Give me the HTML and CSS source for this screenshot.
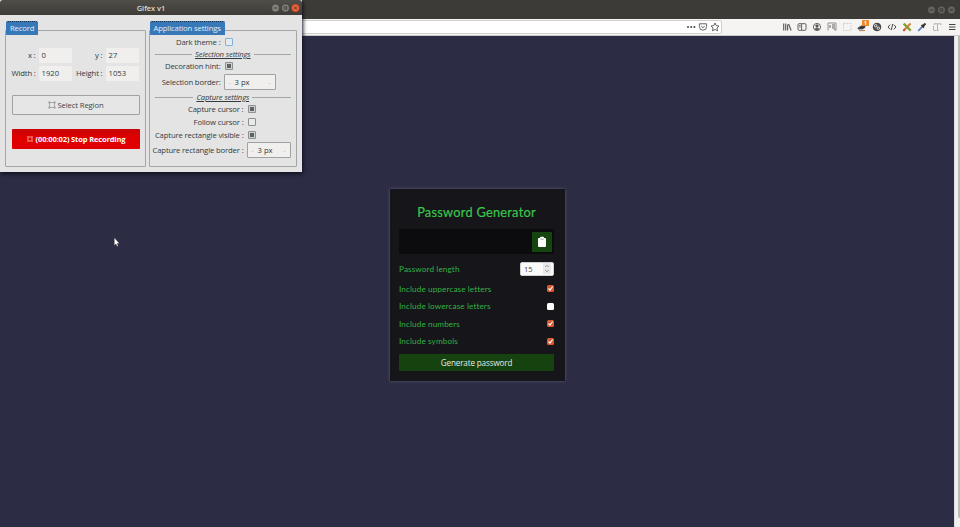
FILE: index.html
```html
<!DOCTYPE html>
<html lang="en">
<head>
<meta charset="utf-8">
<title>Password Generator</title>
<link rel="stylesheet" href="styles.css">
</head>
<body>
<div class="browser">
  <header class="titlebar">
    <svg class="winbtns dim" viewBox="0 0 30 10"><circle cx="4.500" cy="5" r="3.900"/><circle cx="14.500" cy="5" r="3.900"/><circle cx="24.500" cy="5" r="3.900"/><path d="M2.700 5h3.600M13.200 3.800h2.600v2.400h-2.600zM23.200 3.700l2.600 2.600M25.800 3.700l-2.600 2.600"/></svg>
  </header>
  <nav class="toolbar">
    <div class="urlbar">
      <svg viewBox="0 0 12 12" class="solid"><circle cx="3" cy="6" r="1.1"/><circle cx="6.2" cy="6" r="1.1"/><circle cx="9.4" cy="6" r="1.1"/></svg>
      <svg viewBox="0 0 12 12"><path d="M2.4 2.8h7.2v2.8a3.6 3.6 0 0 1-7.2 0zM4.2 5l1.8 1.7L7.8 5"/></svg>
      <svg viewBox="0 0 12 12"><path d="M6 2l1.2 2.6 2.8.4-2 2 .5 2.8L6 8.500l-2.500 1.300L4 7 2 5l2.800-.4z"/></svg>
    </div>
    <div class="tools">
      <svg viewBox="0 0 12 12"><path d="M2.700 2.500v7M4.700 2.500v7M6.600 3.500v6M7.600 3l2.500 6.500" stroke-width="1.100"/></svg>
      <svg viewBox="0 0 12 12"><rect x="2" y="2.700" width="8" height="6.600" rx="1"/><path d="M5.600 3v6M3.200 4.600h1.400M3.200 6h1.400"/></svg>
      <svg viewBox="0 0 12 12"><circle cx="6" cy="6" r="3.600"/><circle cx="6" cy="5" r="1.200" fill="#555"/><path d="M4 8c.5-1 3.500-1 4 0l-2 .8z" fill="#555"/></svg>
      <svg viewBox="0 0 12 12"><path d="M2 9.500v-7.500h8v7.500" stroke="#888"/><path d="M3 4h2v3H3zM6 3h3v5H6zM8 7h2v2.500H8z" fill="#aaa" stroke="none"/></svg>
      <svg viewBox="0 0 12 12"><rect x="2.500" y="2.500" width="7.500" height="7" stroke="#ccc" stroke-dasharray="2 1"/></svg>
      <div class="badged"><svg viewBox="0 0 12 12"><path d="M2 7l3-2 4-.5v2L6.500 8 2 8z" fill="#333"/><path d="M3 9.600h6" stroke="#a87048"/></svg><b>1</b></div>
      <svg viewBox="0 0 12 12"><circle cx="6" cy="6" r="3.800" fill="#555" stroke="#333"/><circle cx="4.600" cy="4.700" r="1.200" stroke="#eee"/><circle cx="7.400" cy="7.200" r="1.200" stroke="#eee"/></svg>
      <svg viewBox="0 0 12 12"><path d="M4.200 3.600L2 6l2.200 2.400M7.800 3.600L10 6 7.800 8.400M6.700 3L5.300 9" stroke="#333"/></svg>
      <svg viewBox="0 0 12 12"><path d="M9.600 2.500L2.600 9.500" stroke="#d37a38" stroke-width="1.900"/><path d="M2.700 2.700l7 7" stroke="#87a02d" stroke-width="2.400"/><path d="M2.300 9.800l1.500-1.500" stroke="#d34334" stroke-width="1.800"/></svg>
      <svg viewBox="0 0 12 12"><path d="M2.200 9.800l4-4" stroke="#4b82c6" stroke-width="1.700"/><path d="M5.500 4l2.500 2.500M7 5l2.500-2.500" stroke="#333" stroke-width="1.900"/></svg>
      <svg viewBox="0 0 12 12"><path d="M3 4V2.800h7V4M6.500 3v6.500M5.400 9.500h2.200M2.500 5v4.500M3 9.500h2" stroke="#aaa"/></svg>
      <svg viewBox="0 0 12 12"><path d="M3 3.500h6.500M3 6h6.500M3 8.500h6.500" stroke="#444" stroke-width="1"/></svg>
    </div>
  </nav>
  <div class="viewport">
    <main class="page">
      <section class="card">
        <h1>Password Generator</h1>
        <div class="result">
          <button class="copy"><svg viewBox="0 0 12 14"><rect x="2" y="3" width="8" height="9" rx="1" fill="#fff"/><rect x="4" y="1.700" width="4" height="2.500" rx="1" fill="#fff"/><path d="M4.200 4.200h3.600" stroke="#7b8b7b" stroke-width=".7"/></svg></button>
        </div>
        <div class="row length"><span>Password length</span><div class="num"><span>15</span><i><svg viewBox="0 0 8 11"><path d="M2.300 4L4 2.300 5.700 4M2.300 7L4 8.700 5.700 7"/></svg></i></div></div>
        <div class="row"><span>Include uppercase letters</span><svg class="check" viewBox="0 0 7 7"><path d="M1.500 3.500l1.500 1.600 2.600-3.600"/></svg></div>
        <div class="row"><span>Include lowercase letters</span><svg class="check off" viewBox="0 0 7 7"></svg></div>
        <div class="row"><span>Include numbers</span><svg class="check" viewBox="0 0 7 7"><path d="M1.500 3.500l1.500 1.600 2.600-3.600"/></svg></div>
        <div class="row"><span>Include symbols</span><svg class="check" viewBox="0 0 7 7"><path d="M1.500 3.500l1.500 1.600 2.600-3.600"/></svg></div>
        <button class="generate">Generate password</button>
      </section>
    </main>
    <div class="scroll"><i></i></div>
  </div>
</div>

<div class="gifex">
  <header class="gtitle"><span>Gifex v1</span>
    <svg class="winbtns" viewBox="0 0 30 10"><circle cx="4.500" cy="5" r="3.900"/><circle cx="14.500" cy="5" r="3.900"/><circle cx="24.500" cy="5" r="4" class="close"/><path d="M2.700 5h3.600M13.200 3.800h2.600v2.400h-2.600zM23.200 3.700l2.600 2.600M25.800 3.700l-2.600 2.600"/></svg>
  </header>
  <div class="panels">
    <section class="panel record">
      <h2>Record</h2>
      <div class="coords">
        <label>x :</label><span class="box">0</span><label>y :</label><span class="box">27</span>
        <label>Width :</label><span class="box">1920</span><label>Height :</label><span class="box">1053</span>
      </div>
      <button class="select"><svg viewBox="0 0 8 8"><path d="M1.500 1.500h5v5h-5z"/><path d="M.8.800h1.300v1.300H.8zM5.900.8h1.300v1.300H5.900zM.8 5.900h1.300v1.300H.8zM5.900 5.900h1.300v1.300H5.900z" class="nodes"/></svg><span>Select Region</span></button>
      <button class="stop"><svg viewBox="0 0 8 8"><rect x="2" y="2" width="4" height="4" rx=".5"/><path d="M1.300 1.700h1M5.700 1.700h1M1.300 6.300h1M5.700 6.300h1"/></svg><span>(00:00:02) Stop Recording</span></button>
    </section>
    <section class="panel settings">
      <h2>Application settings</h2>
      <div class="opt r1"><label>Dark theme :</label><i class="cb focus"></i></div>
      <div class="sep"><span>Selection settings</span></div>
      <div class="opt r2"><label>Decoration hint:</label><i class="cb on"></i></div>
      <div class="opt r3"><label>Selection border:</label><div class="spin"><i>-</i><span>3 px</span><i>-</i></div></div>
      <div class="sep s2"><span>Capture settings</span></div>
      <div class="opt r4"><label>Capture cursor :</label><i class="cb on"></i></div>
      <div class="opt r4"><label>Follow cursor :</label><i class="cb"></i></div>
      <div class="opt r4"><label>Capture rectangle visible :</label><i class="cb on"></i></div>
      <div class="opt r5"><label>Capture rectangle border :</label><div class="spin"><i>-</i><span>3 px</span><i>-</i></div></div>
    </section>
  </div>
</div>
<svg class="cursor" viewBox="0 0 7 10"><path d="M1.200 .6v8l1.800-1.500 1 2.300 1.300-.5-1-2.400h2.300z" fill="#fff" stroke="#111" stroke-width=".4"/></svg>
</body>
</html>
```
FILE: styles.css
```css
* { box-sizing: border-box; }
body { margin: 0; width: 960px; height: 527px; overflow: hidden; position: relative; font-family: "Open Sans", sans-serif; font-size: 7.7px; }
svg { display: block; flex: none; fill: none; stroke: #555; stroke-width: .9; }
button { border: 0; padding: 0; margin: 0; font: inherit; letter-spacing: inherit; }
i { font-style: normal; }

.browser { width: 960px; height: 527px; display: flex; flex-direction: column; }
.titlebar { height: 19px; background: #3c3b37; display: flex; justify-content: flex-end; align-items: center; padding-right: 3px; }
.winbtns { width: 30px; height: 10px; fill: #85827b; stroke: #33322e; stroke-width: .5; }
.winbtns path { fill: none; stroke-width: .8; }
.winbtns .close { fill: #ec6237; stroke: #80331d; }
.winbtns.dim { fill: #66645e; stroke: #2e2d2a; }
.toolbar { height: 17px; background: #f5f4f2; border-bottom: 1px solid #c9c8cb; display: flex; align-items: center; justify-content: space-between; padding-right: 2px; }
.urlbar { width: 722px; height: 14px; background: #fff; border: 1px solid #d2d0cd; border-radius: 2px; display: flex; justify-content: flex-end; align-items: center; }
.urlbar svg { width: 12px; height: 12px; }
.urlbar .solid { fill: #555; stroke: none; }
.tools { display: flex; gap: 3px; }
.tools svg { width: 12px; height: 12px; }
.badged { position: relative; }
.badged b { position: absolute; left: 6px; top: -1px; width: 7px; height: 6px; background: #f0892c; color: #fff; font-size: 5px; line-height: 6px; text-align: center; }
.viewport { flex: 1; display: flex; }
.page { width: 954px; background: #2c2d44; display: flex; flex-direction: column; align-items: center; padding-top: 153px; }
.scroll { width: 6px; background: #efefed; border-left: 1px solid #dddde3; padding-left: 3px; }
.scroll i { display: block; height: 482px; background: #b9bbb7; border-radius: 0 0 0 2px; }

.card { width: 175px; height: 192px; background: #15151a; padding: 13px 10.5px 10px 9.5px; color: #34b045; font-family: Lato, sans-serif; box-shadow: 0 0 3px 0 #5d5e7c; display: flex; flex-direction: column; }
.card h1 { margin: 0; height: 20px; line-height: 20px; font-size: 12.8px; font-weight: 400; text-align: center; color: #3bc64a; white-space: nowrap; -webkit-text-stroke: .2px #3bc64a; letter-spacing: .25px; }
.result { margin-top: 7px; height: 25px; background: #0c0c0f; display: flex; justify-content: flex-end; align-items: center; padding-right: 2px; }
.copy { width: 20px; height: 20px; background: #15460f; display: grid; place-items: center; }
.copy svg { width: 12px; height: 14px; stroke: none; }
.row { height: 17.5px; display: flex; align-items: center; justify-content: space-between; font-size: 8.2px; letter-spacing: .1px; white-space: nowrap; }
.length { height: 15px; margin: 7px 0 4px; }
.num { width: 34px; height: 14px; background: #fafafa; border: 1px solid #cfcfcf; border-radius: 2px; color: #444; display: flex; justify-content: space-between; align-items: center; padding: 0 2px 0 3px; font: 7.5px "Open Sans", sans-serif; letter-spacing: 0; }
.num svg { width: 8px; height: 11px; stroke: #777; background: #e8e8e8; stroke-width: .8; }
.check { width: 7px; height: 7px; border-radius: 1.5px; background: #d9582f; stroke: #fff; stroke-width: 1.1; }
.off { background: #fff; }
.generate { height: 17px; margin-top: 4px; background: #15420f; color: #e6e9e5; font-family: "Open Sans", sans-serif; font-size: 8.1px; letter-spacing: -.14px; line-height: 17px; text-align: center; }

.gifex { position: absolute; left: 0; top: 0; width: 302px; height: 172px; background: #e4e4e4; box-shadow: 1px 2px 4px #101020; color: #323a3d; letter-spacing: -.14px; display: flex; flex-direction: column; }
.gtitle { height: 15px; background: linear-gradient(#504e48, #3d3c37); display: grid; grid-template-columns: 31px 1fr 31px; align-items: center; color: #dfdbd2; font-weight: 600; font-size: 7.4px; text-align: center; border-radius: 3px 3px 0 0; letter-spacing: 0; }
.gtitle span { grid-column: 2; }
.panels { display: flex; gap: 3px; padding: 15px 5px 0; }
.panel { position: relative; height: 137px; border: 1px solid #a3a6a6; border-radius: 1px; }
.record { width: 141px; padding: 16.5px 5px 0 5.5px; }
.settings { width: 149px; padding: 5px; }
.panel h2 { position: absolute; left: 0; top: -10px; margin: 0; height: 14px; line-height: 13px; padding: 0 4px; background: #3778b8; border-top: 1px dotted #143457; border-radius: 2px 2px 0 0; color: #e3ecf5; font-size: 7.7px; font-weight: 400; white-space: nowrap; }
.coords { display: grid; grid-template-columns: 24px 33px 28px 33px; grid-template-rows: 15px 15px; column-gap: 3px; row-gap: 3px; align-items: center; white-space: nowrap; }
.coords label { text-align: right; }
.box { height: 15px; line-height: 15px; padding-left: 3px; background: #f0efed; letter-spacing: 0; }
.select, .stop { width: 128px; height: 20px; display: flex; align-items: center; justify-content: center; gap: 2px; border-radius: 1px; white-space: nowrap; }
.select { margin-top: 14px; border: 1px solid #a0a2a2; background: #e6e6e6; color: #3f474a; }
.stop { margin-top: 14.5px; background: linear-gradient(#c60606, #e10000 45%); color: #fff; font-weight: 700; font-size: 7.5px; }
.select svg, .stop svg { width: 8px; height: 8px; stroke: #777; stroke-width: .5; }
.select .nodes { fill: #e6e6e6; }
.stop svg { stroke: #ffb0a0; stroke-width: .9; }
.opt { height: 13px; display: flex; align-items: center; gap: 4px; white-space: nowrap; }
.opt label { text-align: right; width: 89px; display: flex; justify-content: flex-end; }
.r1 label, .r2 label, .r3 label { width: 66px; }
.r1, .r2 { height: 12px; }
.sep { height: 12px; display: flex; align-items: center; gap: 3px; font-style: italic; white-space: nowrap; text-decoration: underline; }
.r3 { height: 20px; }
.r5 { height: 18px; }
.cb { width: 8px; height: 8px; border: 1px solid #8d9090; border-radius: 1px; background: #e9e9e9; }
.focus { border-color: #7eb3df; }
.on { background: #5e6262; box-shadow: inset 0 0 0 1px #d0d2d2; }
.spin { width: 52px; height: 16px; border: 1px solid #a0a2a2; border-radius: 1px; background: #f0efed; display: flex; align-items: center; padding: 0 2px; letter-spacing: 0; }
.r3 .spin { margin-left: -1px; }
.r5 .spin { width: 44px; margin-left: -1px; }
.spin i { color: #bbb; width: 6px; text-align: center; }
.spin span { flex: 1; padding-left: 2px; }
.sep::before, .sep::after { content: ""; flex: 1; height: 1px; background: #a3a6a6; }
.s2 { height: 10px; }
.cursor { position: absolute; left: 113px; top: 237px; width: 7px; height: 10px; }
```
